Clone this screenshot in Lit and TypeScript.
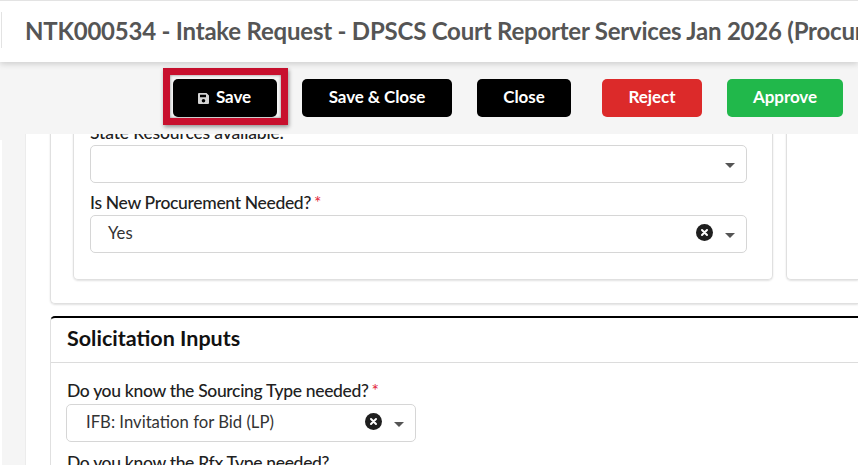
import { LitElement, html, css } from 'lit';
import { customElement } from 'lit/decorators.js';

/**
 * Intake request form, scrolled part way down, with the Save button highlighted
 */
@customElement('app-root')
export class AppRoot extends LitElement {

    static styles = css`
        :host {
            display: block;
            width: 858px;
            height: 465px;
            overflow: hidden;
            position: relative;
            background: #fff;
            font-family: Lato, "Liberation Sans", sans-serif;
            color: #212121;
        }
        .title-bar {
            position: relative;
            z-index: 2;
            height: 62px;
            box-sizing: border-box;
            border-top: 1px solid #e3e3e3;
            background: #fff;
            box-shadow: 0 2px 6px rgba(0, 0, 0, 0.16);
            display: flex;
            align-items: center;
            padding: 0 0 0 1px;
            white-space: nowrap;
            overflow: hidden;
        }
        .title-rule {
            width: 1px;
            height: 36px;
            background: #e3e3e3;
            flex: none;
            align-self: flex-start;
            margin-top: 11px;
        }
        .title {
            margin: -3px 0 0 23px;
            font-size: 24px;
            font-weight: 700;
            letter-spacing: -0.22px;
            color: #555;
        }
        .toolbar {
            position: relative;
            z-index: 1;
            height: 72px;
            box-sizing: border-box;
            background: #f5f5f5;
            display: flex;
            align-items: flex-start;
            padding: 17px 0 0 173px;
        }
        button {
            height: 38px;
            border: none;
            border-radius: 5px;
            background: #000;
            color: #fff;
            font-family: inherit;
            font-size: 17px;
            font-weight: 700;
            letter-spacing: -0.1px;
            padding: 0 0 3px;
            display: flex;
            align-items: center;
            justify-content: center;
            gap: 6px;
            flex: none;
        }
        .save svg {
            margin: 3px 0 0 -2px;
        }
        .save-wrap {
            position: relative;
            margin-right: 25px;
        }
        .highlight {
            position: absolute;
            left: -10px;
            top: -11px;
            width: 125px;
            height: 57px;
            box-sizing: border-box;
            border: 7px solid #c8102e;
            box-shadow: 1px 2px 4px rgba(0, 0, 0, 0.4), inset 0 0 3px rgba(0, 0, 0, 0.45);
            pointer-events: none;
        }
        .save { width: 104px; }
        .save-close { width: 150px; margin-right: 25px; }
        .close { width: 94px; margin-right: 31px; }
        .reject { width: 100px; margin-right: 25px; background: #dc2a2a; }
        .approve { width: 116px; background: #21b84b; }
        .viewport {
            height: 331px;
            overflow: hidden;
            background: #fff;
            display: flex;
        }
        .edge {
            width: 2px;
            flex: none;
            background: linear-gradient(#f5f5f5 6px, #fff 6px);
        }
        .gutter {
            width: 24px;
            flex: none;
            box-sizing: border-box;
            background: #f5f5f5;
            border-right: 1px solid #ececec;
        }
        .page {
            flex: 1;
            min-width: 0;
            padding: 0 0 0 24px;
        }
        .outer {
            margin-top: -20px;
            height: 190px;
            box-sizing: border-box;
            border: 1px solid #e0e0e0;
            border-top: none;
            border-right: none;
            border-radius: 0 0 0 5px;
            box-shadow: 0 1px 2px rgba(0, 0, 0, 0.12);
            display: flex;
            gap: 13px;
            padding: 0 0 0 22px;
        }
        .inner {
            width: 700px;
            height: 166px;
            flex: none;
            box-sizing: border-box;
            border: 1px solid #e0e0e0;
            border-top: none;
            border-radius: 0 0 5px 5px;
            box-shadow: 0 1px 2px rgba(0, 0, 0, 0.12);
            padding: 9px 25px 0 16px;
        }
        .inner.side {
            flex: 1;
            width: auto;
            border-right: none;
            border-radius: 0 0 0 5px;
        }
        .label {
            font-size: 17.5px;
            font-weight: 500;
            letter-spacing: -0.33px;
            line-height: 20px;
            height: 20px;
            white-space: nowrap;
            margin-bottom: 2px;
        }
        .label.state { letter-spacing: -0.15px; }
        .req {
            color: #e3263c;
            margin-left: 3px;
            font-weight: 400;
        }
        .select {
            position: relative;
            height: 38px;
            box-sizing: border-box;
            border: 1px solid #d6d6d6;
            border-radius: 5px;
            background: #fff;
            font-size: 16.7px;
            display: flex;
            align-items: center;
            padding: 0 11px 0 17px;
            color: #333;
        }
        .select span.value { flex: 1; margin-top: -3px; }
        .clear {
            width: 17px;
            height: 17px;
            margin: -3px 12px 0 0;
            flex: none;
        }
        .caret {
            width: 0;
            height: 0;
            flex: none;
            border-left: 5px solid transparent;
            border-right: 5px solid transparent;
            border-top: 5px solid #555;
            margin-top: 2px;
        }
        .need-label { margin-top: 10px; }
        .section {
            margin-top: 12px;
            box-sizing: border-box;
            height: 200px;
            border-top: 2px solid #000;
            border-left: 1px solid #e0e0e0;
            border-radius: 5px 0 0 0;
        }
        .section h2 {
            margin: 0;
            height: 45px;
            box-sizing: border-box;
            padding: 0 0 0 16px;
            border-bottom: 1px solid #dcdcdc;
            font-size: 21.5px;
            font-weight: 700;
            line-height: 40px;
            color: #111;
        }
        .section-body { padding: 18px 0 0 15px; }
        .section-body .select { width: 350px; padding: 0 11px 0 19px; }
        .section-body .label { margin: 0 0 3px 1px; }
        .section-body .label.next { margin-top: 11px; }
    `;

    private clearIcon() {
        return html`<svg class="clear" viewBox="0 0 17 17">
            <circle cx="8.5" cy="8.5" r="8.5" fill="#1f1f1f"></circle>
            <path d="M6 6l5 5M11 6l-5 5" stroke="#fff" stroke-width="2" stroke-linecap="round"></path>
        </svg>`;
    }

    render() {
        return html`
            <div class="title-bar">
                <div class="title-rule"></div>
                <div class="title">NTK000534 - Intake Request - DPSCS Court Reporter Services Jan 2026 (Procurement)</div>
            </div>
            <div class="toolbar">
                <div class="save-wrap">
                    <button class="save">
                        <svg width="13" height="13" viewBox="0 0 13 13">
                            <path fill="#d4d4d4" fill-rule="evenodd" d="M2 1h7.5L12 3.5V11a1 1 0 0 1-1 1H2a1 1 0 0 1-1-1V2a1 1 0 0 1 1-1zm1 1.8v2.4h6V2.8zM6.5 7a1.8 1.8 0 1 0 0 3.6 1.8 1.8 0 0 0 0-3.6z"></path>
                        </svg>
                        Save
                    </button>
                    <div class="highlight"></div>
                </div>
                <button class="save-close">Save &amp; Close</button>
                <button class="close">Close</button>
                <button class="reject">Reject</button>
                <button class="approve">Approve</button>
            </div>
            <div class="viewport">
                <div class="edge"></div>
                <div class="gutter"></div>
                <div class="page">
                    <div class="outer">
                        <div class="inner">
                            <div class="label state">State Resources available:</div>
                            <div class="select"><span class="value"></span><i class="caret"></i></div>
                            <div class="label need-label">Is New Procurement Needed?<span class="req">*</span></div>
                            <div class="select">
                                <span class="value">Yes</span>
                                ${this.clearIcon()}
                                <i class="caret"></i>
                            </div>
                        </div>
                        <div class="inner side"></div>
                    </div>
                    <div class="section">
                        <h2>Solicitation Inputs</h2>
                        <div class="section-body">
                            <div class="label">Do you know the Sourcing Type needed?<span class="req">*</span></div>
                            <div class="select">
                                <span class="value">IFB: Invitation for Bid (LP)</span>
                                ${this.clearIcon()}
                                <i class="caret"></i>
                            </div>
                            <div class="label next">Do you know the Rfx Type needed?</div>
                        </div>
                    </div>
                </div>
            </div>
        `;
    }
}
